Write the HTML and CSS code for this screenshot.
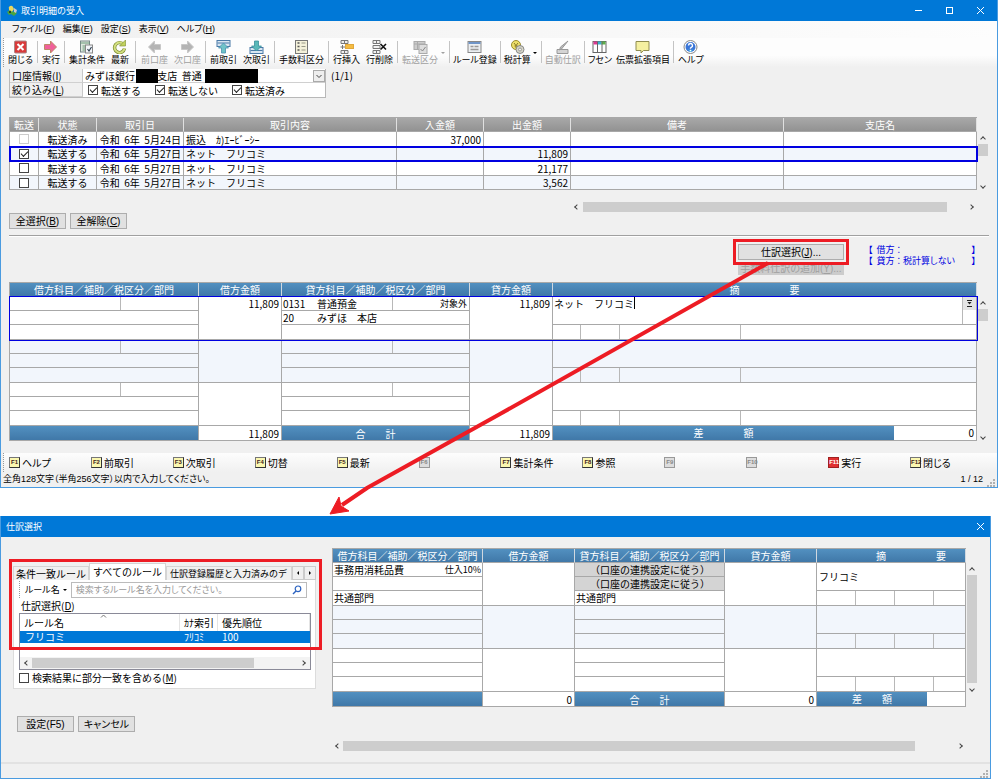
FILE: index.html
```html
<!DOCTYPE html>
<html lang="ja">
<head>
<meta charset="utf-8">
<title>取引明細の受入</title>
<link rel="stylesheet" href="styles.css">
</head>
<body>
<main class="stage">
<section class="window win-main">
  <header class="titlebar">
    <svg class="app-icon" width="12" height="12" viewBox="0 0 12 12"><path d="M3 4a2 2 0 0 1 4-2l1 2-2 3-3-1z" fill="#e8d860"/><path d="M1 7l3-2 2 2 3-1 2 2-3 3-3-2-2 1z" fill="#4aa53c"/><path d="M8 3l3 2-1 3-2-1z" fill="#c8c8d0"/><circle cx="4" cy="7" r="1" fill="#222"/></svg>
    <h1>取引明細の受入</h1>
    <div class="win-controls">
      <button aria-label="最小化"><svg width="9" height="9" viewBox="0 0 9 9"><path d="M1 4.5h7" stroke="#fff"/></svg></button>
      <button aria-label="最大化"><svg width="9" height="9" viewBox="0 0 9 9"><rect x="1.5" y="1.5" width="6" height="6" fill="none" stroke="#fff"/></svg></button>
      <button aria-label="閉じる"><svg width="9" height="9" viewBox="0 0 9 9"><path d="M1 1l7 7M8 1L1 8" stroke="#fff"/></svg></button>
    </div>
  </header>
  <nav class="menubar">
    <button>ファイル(<u>F</u>)</button><button>編集(<u>E</u>)</button><button>設定(<u>S</u>)</button><button>表示(<u>V</u>)</button><button>ヘルプ(<u>H</u>)</button>
  </nav>
  <div class="toolbar">
    <button><svg viewBox="0 0 14 14"><rect x="1" y="1" width="12" height="12" rx="1" fill="#d93a3a" stroke="#a88"/><path d="M4 4l6 6M10 4l-6 6" stroke="#fff" stroke-width="2"/></svg>閉じる</button>
    <i class="sep"></i>
    <button><svg viewBox="0 0 14 14"><path d="M1 4.500h6V1l6 6-6 6V9.500H1z" fill="#f0609a" stroke="#b86"/></svg>実行</button>
    <i class="sep"></i>
    <button><svg viewBox="0 0 14 14"><rect x="1" y="1" width="9" height="11" fill="#dfe8df" stroke="#788"/><path d="M1 3h9M3 6h3M3 8h3M3 10h3" stroke="#6a9a7a"/><rect x="6" y="5" width="7" height="8" fill="#f4f6fa" stroke="#888"/><path d="M8 9l1.500 2L12 7" fill="none" stroke="#345" stroke-width="1.200"/></svg>集計条件</button>
    <button><svg viewBox="0 0 14 14"><path d="M11 4.500A5 5 0 1 0 12 8.500" fill="none" stroke="#7c8a30" stroke-width="3.400"/><path d="M11 4.500A5 5 0 1 0 12 8.500" fill="none" stroke="#d2df80" stroke-width="2"/><path d="M13 0v6H7z" fill="#c2d35c" stroke="#7c8a30" stroke-width=".6"/></svg>最新</button>
    <i class="sep roomy"></i>
    <button class="off"><svg viewBox="0 0 14 14"><path d="M13 4.500H7V1L1 7l6 6V9.500h6z" fill="#b4b4b4" stroke="#c8c8c8"/></svg>前口座</button>
    <button class="off"><svg viewBox="0 0 14 14"><path d="M1 4.500h6V1l6 6-6 6V9.500H1z" fill="#b4b4b4" stroke="#c8c8c8"/></svg>次口座</button>
    <i class="sep"></i>
    <button><svg viewBox="0 0 14 14"><rect x=".5" y=".5" width="13" height="6" fill="#d8e6f2" stroke="#4a7aa8"/><path d="M1 3h12" stroke="#4a7aa8"/><path d="M7 3l5 5H9v5H5V8H2z" fill="#6fc3c8" stroke="#4a8fb0" stroke-width=".8"/></svg>前取引</button>
    <button><svg viewBox="0 0 14 14"><rect x=".5" y="7.500" width="13" height="6" fill="#d8e6f2" stroke="#4a7aa8"/><path d="M1 10.500h12" stroke="#4a7aa8"/><path d="M7 11L2 6h3V1h4v5h3z" fill="#59b8b8" stroke="#3a8f9c" stroke-width=".8"/></svg>次取引</button>
    <i class="sep"></i>
    <button><svg viewBox="0 0 14 14"><rect x="1" y=".5" width="12" height="13" fill="#f4f1da" stroke="#777"/><path d="M3 3h2M3 6.500h2M3 10h2" stroke="#555" stroke-width="1.500"/><path d="M7 3h4M7 6.500h4M7 10h4" stroke="#998"/></svg>手数料区分</button>
    <i class="sep"></i>
    <button><svg viewBox="0 0 14 14"><path d="M1.500.5h7v3h-7zM1.500 10.500h7v3h-7zM5 .5v3M5 10.500v3M1 7h5M3 5v4" fill="#eee" stroke="#777"/><rect x="6" y="4.500" width="8" height="4" fill="#f5bc42" stroke="#e0a83c"/></svg>行挿入</button>
    <button><svg viewBox="0 0 14 14"><path d="M.5.500h7v3h-7zM.5 5.500h7v3h-7zM.5 10.500h7v3h-7zM4 .5v3M4 10.500v3" fill="#f2f2f2" stroke="#777"/><path d="M8 4l5.500 5.500M13.500 4L8 9.500" stroke="#111" stroke-width="1.600"/></svg>行削除</button>
    <i class="sep"></i>
    <button class="off"><svg viewBox="0 0 14 14"><rect x=".5" y="1.500" width="11" height="8" fill="#ccc" stroke="#aaa"/><path d="M.5 4h11M4 2v7" stroke="#aaa"/><rect x="5.500" y="4.500" width="8" height="9" fill="#ddd" stroke="#aaa"/><path d="M7 9l2 2 3-4" fill="none" stroke="#888"/></svg>転送区分</button><i class="caret off"></i>
    <i class="sep"></i>
    <button class="tight"><svg viewBox="0 0 14 14"><rect x=".5" y="1.500" width="13" height="11" fill="#eceff2" stroke="#888"/><path d="M1 3h12" stroke="#6f95c8" stroke-width="2"/><path d="M3 6.500h3M7 6.500h4M3 9.500h8" stroke="#999" stroke-width="1.500"/></svg>ルール登録</button>
    <i class="sep"></i>
    <button class="tight"><svg viewBox="0 0 14 14"><circle cx="5.500" cy="5" r="4.500" fill="#eddf6a" stroke="#998c30"/><path d="M3.500 3l2 2.500 2-2.500M5.500 5v3M4 6h3" stroke="#887a28" fill="none"/><circle cx="9.500" cy="9.500" r="4" fill="#d6d6c8" stroke="#888"/><circle cx="9.500" cy="9.500" r="1.500" fill="#f2f2ea" stroke="#999"/></svg>税計算</button><i class="caret"></i>
    <i class="sep"></i>
    <button class="off tight"><svg viewBox="0 0 14 14"><path d="M1.500 9.500h11v4h-11z" fill="#d4d4d4" stroke="#999"/><path d="M12.500 1L6 9l-2 1 1-3z" fill="#bbb" stroke="#999"/></svg>自動仕訳</button>
    <i class="sep"></i>
    <button class="tight"><svg viewBox="0 0 14 14"><rect x=".5" y="1.500" width="13" height="11" fill="#fff" stroke="#666"/><path d="M1 3h4" stroke="#d83a90" stroke-width="3"/><path d="M5 3h4" stroke="#38b0d0" stroke-width="3"/><path d="M9 3h4" stroke="#5cb04a" stroke-width="3"/><path d="M5 2v10M9.500 2v10" stroke="#666"/></svg>フセン</button>
    <button class="tight"><svg viewBox="0 0 14 14"><path d="M.5 1.500h13v9H8L5.500 13v-2.500h-5z" fill="#f5f0a0" stroke="#8f8c50"/></svg>伝票拡張項目</button>
    <i class="sep"></i>
    <button><svg viewBox="0 0 14 14"><circle cx="7" cy="7" r="6.500" fill="#fff" stroke="#888"/><circle cx="7" cy="7" r="5" fill="#3a76d8"/><path d="M4 9a5 5 0 0 0 6 0L7 12z" fill="#3cc0e0"/><path d="M5 5.500a2 2 0 1 1 2.800 1.800L7 8v.8M7 9.800v1.400" fill="none" stroke="#fff" stroke-width="1.400"/></svg>ヘルプ</button>
  </div>

  <div class="body-main">
    <div class="filter-row">
      <div class="filter">
        <label class="flabel" for="acct">口座情報(<u>I</u>)</label>
        <div class="fselect">
          <select id="acct"><option>みずほ銀行　　&nbsp;支店&nbsp;&nbsp;普通</option></select>
          <span class="redact r1"></span><span class="redact r2"></span>
          <svg class="dd" width="12" height="12" viewBox="0 0 12 12"><rect x=".5" y=".5" width="11" height="11" fill="#eee" stroke="#aaa"/><path d="M3.500 5l2.500 2.500L8.500 5" fill="none" stroke="#444"/></svg>
        </div>
        <span class="flabel">絞り込み(<u>L</u>)</span>
        <div class="fchecks">
          <label><input type="checkbox" checked>転送する</label>
          <label><input type="checkbox" checked>転送しない</label>
          <label><input type="checkbox" checked>転送済み</label>
        </div>
      </div>
      <span class="count">(1/1)</span>
    </div>

    <div class="grid-wrap">
      <table class="list">
        <colgroup><col class="c29"><col class="c58"><col class="c87"><col class="c213"><col class="c87"><col class="c87"><col class="c213"><col></colgroup>
        <thead><tr><th>転送</th><th>状態</th><th>取引日</th><th>取引内容</th><th>入金額</th><th>出金額</th><th>備考</th><th>支店名</th></tr></thead>
        <tbody>
          <tr><td class="mid"><input type="checkbox" disabled aria-label="転送"></td><td class="mid">転送済み</td><td class="num">令和&nbsp; 6年&nbsp; 5月24日</td><td>振込　ｶ)ｴｰﾋﾞｰｼｰ</td><td class="num">37,000</td><td></td><td></td><td></td></tr>
          <tr class="sel"><td class="mid"><input type="checkbox" checked aria-label="転送"></td><td class="mid">転送する</td><td class="num">令和&nbsp; 6年&nbsp; 5月27日</td><td>ネット　フリコミ</td><td></td><td class="num">11,809</td><td></td><td></td></tr>
          <tr><td class="mid"><input type="checkbox" aria-label="転送"></td><td class="mid">転送する</td><td class="num">令和&nbsp; 6年&nbsp; 5月27日</td><td>ネット　フリコミ</td><td></td><td class="num">21,177</td><td></td><td></td></tr>
          <tr><td class="mid"><input type="checkbox" aria-label="転送"></td><td class="mid">転送する</td><td class="num">令和&nbsp; 6年&nbsp; 5月27日</td><td>ネット　フリコミ</td><td></td><td class="num">3,562</td><td></td><td></td></tr>
        </tbody>
      </table>
      <div class="vscroll"><i class="ar ar-up"></i><i class="thumb short"></i><i class="ar ar-down"></i></div>
    </div>
    <div class="hscroll hs-main"><i class="ar ar-left"></i><i class="thumb"></i><i class="ar ar-right"></i></div>

    <div class="btn-row">
      <button class="btn w57">全選択(<u>B</u>)</button><button class="btn w57">全解除(<u>C</u>)</button>
    </div>
    <hr>
    <div class="action-row">
      <div class="actions">
        <div class="marked"><button class="btn wide">仕訳選択(<u>J</u>)...</button></div>
        <button class="btn wide low" disabled>手数料仕訳の追加(<u>Y</u>)...</button>
      </div>
      <div class="taxinfo">
        <div><span>【&nbsp; 借方 ：</span><span>】</span></div>
        <div><span>【&nbsp; 貸方 ： 税計算しない</span><span>】</span></div>
      </div>
    </div>

    <div class="grid-wrap">
      <table class="journal">
        <colgroup><col class="c189"><col class="c83"><col class="c188"><col class="c83"><col></colgroup>
        <thead><tr><th>借方科目／補助／税区分／部門</th><th>借方金額</th><th>貸方科目／補助／税区分／部門</th><th>貸方金額</th><th>摘　　　　　要</th></tr></thead>
        <tbody>
          <tr class="sel">
            <td><div class="lines"><div class="split"><span></span><span></span></div><div></div><div></div></div></td>
            <td class="num">11,809</td>
            <td><div class="lines"><div class="split"><span><b class="code">0131</b>普通預金</span><span class="num small">対象外</span></div><div><b class="code">20</b>みずほ　本店</div><div></div></div></td>
            <td class="num">11,809</td>
            <td><div class="memo"><div class="memo-top edit"><input class="memo-in" type="text" value="ネット　フリコミ" aria-label="摘要"><span class="memo-side"><button aria-label="候補"><svg width="7" height="7" viewBox="0 0 7 7"><path d="M1 .5h5M1 6.500h5" stroke="#222"/><path d="M1.500 2h4l-2 2.500z" fill="#222"/></svg></button></span></div><div class="memo-sub"><span></span><span></span><span></span><span></span></div></div></td>
          </tr>
          <tr class="alt">
            <td><div class="lines"><div class="split"><span></span><span></span></div><div></div><div></div></div></td><td></td>
            <td><div class="lines"><div class="split"><span></span><span></span></div><div></div><div></div></div></td><td></td>
            <td><div class="memo"><div class="memo-top"></div><div class="memo-sub"><span></span><span></span><span></span><span></span></div></div></td>
          </tr>
          <tr>
            <td><div class="lines"><div class="split"><span></span><span></span></div><div></div><div></div></div></td><td></td>
            <td><div class="lines"><div class="split"><span></span><span></span></div><div></div><div></div></div></td><td></td>
            <td><div class="memo"><div class="memo-top"></div><div class="memo-sub"><span></span><span></span><span></span><span></span></div></div></td>
          </tr>
        </tbody>
        <tfoot><tr><td class="blue"></td><td class="num">11,809</td><td class="blue">合　　計</td><td class="num">11,809</td><td><div class="diff"><span class="blue">差　　　　額</span><span class="num rest">0</span></div></td></tr></tfoot>
      </table>
      <div class="vscroll"><i class="ar ar-up"></i><i class="thumb short"></i><i class="ar ar-down"></i></div>
    </div>
  </div>

  <div class="fkeys">
    <button><kbd>F1</kbd>ヘルプ</button><button><kbd>F2</kbd>前取引</button><button><kbd>F3</kbd>次取引</button><button><kbd>F4</kbd>切替</button><button><kbd>F5</kbd>最新</button><button disabled><kbd>F6</kbd></button><button><kbd>F7</kbd>集計条件</button><button><kbd>F8</kbd>参照</button><button disabled><kbd>F9</kbd></button><button disabled><kbd>F10</kbd></button><button class="run"><kbd>F11</kbd>実行</button><button><kbd>F12</kbd>閉じる</button>
  </div>
  <footer class="status"><span>全角128文字（半角256文字）以内で入力してください。</span><span class="pos">1 / 12</span><svg class="grip" width="8" height="8" viewBox="0 0 8 8"><path d="M6 0h2v2H6zM3 3h2v2H3zM6 3h2v2H6zM0 6h2v2H0zM3 6h2v2H3zM6 6h2v2H6z" fill="#b0b0b0"/></svg></footer>
</section>

<section class="window win-sub">
  <header class="titlebar">
    <h2>仕訳選択</h2>
    <div class="win-controls"><button aria-label="閉じる"><svg width="9" height="9" viewBox="0 0 9 9"><path d="M1 1l7 7M8 1L1 8" stroke="#fff"/></svg></button></div>
  </header>
  <div class="body-sub">
    <div class="rule-col">
      <div class="tabs"><button>条件一致ルール</button><button class="on">すべてのルール</button><button class="cut">仕訳登録履歴と入力済みのデ</button><button class="nav" aria-label="前のタブ"><i class="tri tri-l"></i></button><button class="nav" aria-label="次のタブ"><i class="tri tri-r"></i></button></div>
      <div class="panel">
        <div class="search">
          <button class="kind">ルール名<i class="caret"></i></button>
          <div class="search-box"><input type="text" placeholder="検索するルール名を入力してください。" aria-label="ルール名"><svg width="10" height="10" viewBox="0 0 10 10"><circle cx="6" cy="3.800" r="2.800" fill="none" stroke="#2a62c0" stroke-width="1.200"/><path d="M4 6L1 9" stroke="#2a62c0" stroke-width="1.500"/></svg></div>
        </div>
        <div class="caption">仕訳選択(<u>D</u>)</div>
        <div class="rules">
          <table>
            <colgroup><col><col class="c38"><col class="c92"></colgroup>
            <thead><tr><th>ルール名<svg class="sort" width="7" height="4" viewBox="0 0 7 4"><path d="M1 3.500l2.500-2.500 2.500 2.500" fill="none" stroke="#777"/></svg></th><th>ｶﾅ索引</th><th>優先順位</th></tr></thead>
            <tbody><tr><td>フリコミ</td><td>ﾌﾘｺﾐ</td><td>100</td></tr></tbody>
          </table>
          <div class="hscroll hs-rules"><i class="ar ar-left"></i><i class="thumb"></i><i class="ar ar-right"></i></div>
        </div>
        <label class="partial"><input type="checkbox"><span>検索結果に部分一致を含める(<u>M</u>)</span></label>
      </div>
      <div class="redbox"></div>
      <div class="btn-row"><button class="btn w57">設定(F5)</button><button class="btn w57">キャンセル</button></div>
    </div>
    <div class="entry-col">
      <div class="grid-wrap">
        <table class="journal compact">
          <colgroup><col class="c150"><col class="c92"><col class="c150"><col class="c92"><col></colgroup>
          <thead><tr><th>借方科目／補助／税区分／部門</th><th>借方金額</th><th>貸方科目／補助／税区分／部門</th><th>貸方金額</th><th>　　　　摘　　　　　要</th></tr></thead>
          <tbody>
            <tr>
              <td><div class="lines"><div class="pair"><span>事務用消耗品費</span><span class="small">仕入10%</span></div><div></div><div>共通部門</div></div></td><td></td>
              <td><div class="lines"><div class="grey">（口座の連携設定に従う）</div><div class="grey">（口座の連携設定に従う）</div><div>共通部門</div></div></td><td></td>
              <td><div class="memo"><div class="memo-top">フリコミ</div><div class="memo-sub"><span></span><span></span><span></span><span></span></div></div></td>
            </tr>
            <tr class="alt">
              <td><div class="lines"><div></div><div></div><div></div></div></td><td></td>
              <td><div class="lines"><div></div><div></div><div></div></div></td><td></td>
              <td><div class="memo"><div class="memo-top"></div><div class="memo-sub"><span></span><span></span><span></span><span></span></div></div></td>
            </tr>
            <tr>
              <td><div class="lines"><div></div><div></div><div></div></div></td><td></td>
              <td><div class="lines"><div></div><div></div><div></div></div></td><td></td>
              <td><div class="memo"><div class="memo-top"></div><div class="memo-sub"><span></span><span></span><span></span><span></span></div></div></td>
            </tr>
          </tbody>
          <tfoot><tr><td class="blue"></td><td class="num">0</td><td class="blue">合　　計</td><td class="num">0</td><td><div class="diff"><span class="blue">差　　額</span><span class="rest"></span></div></td></tr></tfoot>
        </table>
        <div class="vscroll"><i class="ar ar-up"></i><i class="thumb full"></i><i class="ar ar-down"></i></div>
      </div>
      <div class="hscroll hs-sub"><i class="ar ar-left"></i><i class="thumb"></i><i class="ar ar-right"></i></div>
    </div>
  </div>
  <footer class="status"><svg class="grip" width="8" height="8" viewBox="0 0 8 8"><path d="M6 0h2v2H6zM3 3h2v2H3zM6 3h2v2H6zM0 6h2v2H0zM3 6h2v2H3zM6 6h2v2H6z" fill="#b0b0b0"/></svg></footer>
</section>

<svg class="arrow" width="460" height="270" viewBox="320 250 460 270"><path d="M768 263L500 414 367 488 342 505" fill="none" stroke="#ed1c24" stroke-width="4"/><path d="M330 514l9-17 2 9 8 5z" fill="#ed1c24" stroke="#ed1c24"/></svg>
</main>
</body>
</html>
```
FILE: styles.css
```css
* { box-sizing: border-box; }

body {
  margin: 0;
  background: #fff;
  color: #000;
  font: 10px/13px "Noto Sans CJK JP", "Liberation Sans", sans-serif;
}

button, input, select {
  font: inherit;
  color: inherit;
  margin: 0;
  padding: 0;
  border: 0;
  background: none;
}

i, kbd, b { font-style: normal; font-weight: normal; }

.stage { position: relative; display: flex; flex-direction: column; gap: 28px; }

.window {
  background: #f0f0f0;
  border: 1px solid #4a9be0;
  border-top: 0;
}
.win-main { margin-right: 2px; }
.win-sub { margin-right: 9px; }

.titlebar {
  display: flex;
  align-items: center;
  height: 21px;
  padding: 0 5px;
  background: #0078d7;
  color: #fff;
}
.win-main .titlebar { padding-right: 12px; }
.titlebar h1, .titlebar h2 { margin: 0; font-size: 9px; font-weight: normal; }
.app-icon { margin-right: 3px; }
.win-controls { display: flex; gap: 22px; margin-left: auto; }
.win-controls button { display: flex; }

.menubar {
  display: flex;
  gap: 8px;
  height: 17px;
  padding: 0 11px;
  align-items: center;
  background: linear-gradient(90deg, #f0f0f0, #fdfdfd);
  font: 9px/13px "Liberation Sans", "Noto Sans CJK JP", sans-serif;
  font-feature-settings: "palt";
}

.toolbar {
  display: flex;
  height: 29px;
  margin-left: 2px;
  border-left: 1px dotted #999;
  padding-left: 1px;
  background: linear-gradient(#fdfdfd 60%, #f0f0f0);
  font-size: 9px;
  line-height: 12px;
}
.toolbar button {
  display: flex;
  flex-direction: column;
  align-items: center;
  padding: 2px 3px 0;
  white-space: nowrap;
  font-feature-settings: "palt";
}
.toolbar .tight { padding: 2px 2px 0; }
.toolbar svg { width: 15px; height: 14px; }
.toolbar .off { color: #a0a0a0; }
.sep { width: 1px; margin: 3px 1px 4px; background: #c4c4c4; }
.sep.roomy { margin-left: 3px; margin-right: 2px; }
.caret {
  width: 0;
  height: 0;
  align-self: center;
  border: 2px solid transparent;
  border-top-color: #000;
  border-bottom: 0;
  margin: 0 2px 0 3px;
}
.toolbar .caret { margin: 0 3px 0 0; }
.caret.off { border-top-color: #a0a0a0; }

.body-main { padding: 2px 8px 12px; }

.filter-row { display: flex; gap: 5px; margin-bottom: 19px; }
.filter {
  display: grid;
  grid-template-columns: 73px 242px;
  grid-auto-rows: 14px;
  border: 1px solid #b8b8b8;
  border-top: 0;
}
.flabel { padding-left: 2px; border-right: 1px solid #c8c8c8; border-bottom: 1px solid #d0d0d0; }
.fselect { position: relative; display: flex; background: #fff; border-bottom: 1px solid #d0d0d0; }
.fselect select { flex: 1; appearance: none; padding-left: 2px; line-height: 12px; }
.dd { position: absolute; right: 0; top: 1px; }
.redact { position: absolute; top: 0; height: 14px; background: #000; }
.r1 { left: 53px; width: 22px; }
.r2 { left: 122px; width: 53px; }
.fchecks { display: flex; gap: 14px; padding-left: 5px; background: #fff; }
.fchecks label, .partial { display: flex; align-items: center; gap: 3px; }

input[type="checkbox"] {
  appearance: none;
  position: relative;
  flex: none;
  width: 10px;
  height: 10px;
  border: 1px solid #444;
  background: #fff;
}
input[type="checkbox"]:disabled { border-color: #ccc; }
input[type="checkbox"]:checked::after {
  content: "";
  position: absolute;
  left: 1px;
  top: 1px;
  width: 6px;
  height: 3px;
  border: 1px solid #222;
  border-top: 0;
  border-right: 0;
  transform: rotate(-45deg);
}

.grid-wrap { display: flex; }
.grid-wrap table { flex: 1; width: 0; }

table { table-layout: fixed; border-collapse: separate; border-spacing: 0; }
.list, .journal { border: 1px solid #a8a8a8; border-right: 0; border-bottom: 0; background: #fff; }
.list th, .list td, .journal th, .journal td {
  height: 14px;
  padding: 0;
  border-right: 1px solid #a8a8a8;
  border-bottom: 1px solid #a8a8a8;
  white-space: nowrap;
  font-weight: normal;
}
.list th { background: linear-gradient(#a8a8a8, #929292); color: #fff; border-right-color: #e0e0e0; }
.list td { padding: 0 2px; }
.list tbody tr:nth-child(even) td { background: #f2f6fc; }
.list tbody tr:nth-child(odd) td { height: 15px; }
.list tr.sel, .journal tr.sel { outline: 1px solid #0000e0; }
.list tr.sel { outline-width: 2px; outline-offset: -1px; }
td.mid { text-align: center; }
td.mid input { display: block; margin: 0 auto; }
.num { text-align: right; }
.c29 { width: 29px; } .c38 { width: 38px; } .c58 { width: 58px; } .c83 { width: 83px; } .c87 { width: 87px; }
.c92 { width: 92px; } .c150 { width: 150px; } .c188 { width: 188px; } .c189 { width: 189px; } .c213 { width: 213px; }

.journal th, .blue { background: linear-gradient(#5290c0, #4078a8); color: #fff; text-align: center; }
.journal th { border-right-color: #d0d8e0; }
.journal tbody td { height: 43px; vertical-align: top; }
.journal td.num { padding-right: 2px; }
.journal tfoot td { height: 15px; }
.journal .alt td { background: #f2f6fc; }
.lines { display: grid; grid-template-rows: repeat(3, 14px); }
.lines > div { border-bottom: 1px solid #a8a8a8; padding-left: 1px; }
.lines > div:last-child { border-bottom: 0; }
.lines .split { display: grid; grid-template-columns: 110px 1fr; }
.split span:first-child { border-right: 1px solid #b8b8b8; }
.split .num { padding-right: 2px; }
.code { display: inline-block; width: 34px; }
.small { font-size: 9px; }
.pair { display: flex; justify-content: space-between; padding-right: 1px; }
.lines > .grey { background: #d4d4d4; text-align: center; }
.memo { display: grid; grid-template-rows: 28px 14px; }
.memo-top { border-bottom: 1px solid #a8a8a8; padding-left: 2px; }
.memo-top.edit { display: flex; align-items: flex-start; justify-content: space-between; padding-left: 1px; }
.memo-in { width: 81px; border-right: 1px solid #000; height: 12px; }
.memo-side { align-self: stretch; width: 14px; border-left: 1px solid #b8b8b8; }
.memo-side button { display: flex; align-items: center; justify-content: center; width: 13px; height: 13px; background: #e4e4e4; }
.memo-sub { display: grid; grid-template-columns: 28px 39px 121px 1fr; }
.memo-sub span { border-right: 1px solid #b8b8b8; }
.memo-sub span:last-child { border-right: 0; }
.compact .memo-top { line-height: 28px; }
.compact .memo-sub { grid-template-columns: 39px 39px 39px 1fr; }
.diff { display: flex; }
.diff .blue { flex: 1; height: 14px; }
.diff .rest { width: 82px; padding-right: 2px; }
.compact .diff .rest { width: 38px; }

.vscroll { display: flex; flex-direction: column; align-items: center; width: 12px; padding: 18px 0 2px; }
.hscroll { display: flex; align-items: center; height: 12px; }
.thumb { background: #cdcdcd; }
.vscroll .thumb { width: 10px; }
.thumb.short { height: 12px; margin: 3px 0 auto; }
.vscroll .full { flex: 1; margin: 3px 0 14px; }
.hscroll .thumb { flex: 1; height: 10px; }
.ar { width: 4px; height: 4px; border: solid #444; border-width: 1px 0 0 1px; transform: rotate(45deg); flex: none; }
.ar-up { margin-top: 2px; }
.ar-down { transform: rotate(225deg); }
.compact + .vscroll { padding-bottom: 16px; }
.compact + .vscroll .full { margin-bottom: 4px; }
.ar-left { transform: rotate(-45deg); }
.ar-right { transform: rotate(135deg); }
.list + .vscroll, .journal + .vscroll { flex: none; }
.hs-main { margin: 11px 12px 0 562px; padding: 0 4px; }
.hs-main .thumb { margin: 0 22px 0 4px; }

.btn-row { display: flex; gap: 4px; }
.btn {
  height: 16px;
  border: 1px solid #adadad;
  background: #e1e1e1;
  font: 10px/13px "Liberation Sans", "Noto Sans CJK JP", sans-serif;
  font-feature-settings: "palt";
  white-space: nowrap;
}
.w57 { width: 57px; }
hr { margin: 6px 0 0; border: 0; border-top: 1px solid #a0a0a0; border-bottom: 1px solid #fff; }

.action-row { display: flex; justify-content: flex-end; gap: 24px; padding: 7px 13px 7px 0; }
.actions { width: 106px; }
.marked { position: relative; z-index: 2; display: flex; margin-bottom: 2px; }
.marked::after { content: ""; position: absolute; inset: -5px; border: 3px solid #ed1c24; }
.wide { width: 100%; }
.low { display: block; height: 13px; line-height: 11px; border-color: #ccc; background: #ccc; color: #a0a0a0; }
.taxinfo { width: 108px; color: #0000e0; font-size: 9px; line-height: 11px; }
.taxinfo div { display: flex; justify-content: space-between; font-feature-settings: "palt"; white-space: nowrap; }

.fkeys {
  display: grid;
  grid-template-columns: repeat(12, 1fr);
  height: 19px;
  margin-left: 2px;
  padding: 0 5px;
  border-left: 1px dotted #999;
  background: linear-gradient(#fdfdfd, #f0f0f0);
}
.fkeys button { display: flex; align-items: center; gap: 2px; white-space: nowrap; font-size: 10px; font-feature-settings: "palt"; }
kbd {
  width: 11px;
  height: 11px;
  border: 1px solid #777;
  border-right-color: #333;
  border-bottom-color: #333;
  background: #fbf7b0;
  color: #402020;
  font: bold 6px/9px "Liberation Sans", sans-serif;
  text-align: center;
}
.fkeys button:disabled kbd { background: #ddd; border-color: #999; color: #888; }
.fkeys .run kbd { background: #e03030; border-color: #a02020; color: #fff; }

.status { display: flex; align-items: center; height: 15px; padding: 0 2px; font: 9px/13px "Liberation Sans", "Noto Sans CJK JP", sans-serif; font-feature-settings: "palt"; }
.pos { margin-left: auto; padding-right: 4px; }
.grip { margin-left: auto; align-self: flex-end; }
.pos + .grip { margin-left: 0; }
.win-sub .status { height: 16px; border-top: 2px solid #e2e2e2; }

.body-sub { display: flex; gap: 16px; padding: 11px 12px 10px; }
.rule-col { position: relative; width: 303px; padding-top: 15px; }
.entry-col { flex: 1; }
.tabs { display: flex; align-items: flex-end; height: 17px; }
.tabs button { height: 14px; border: 1px solid #d4d4d4; border-bottom: 0; white-space: nowrap; padding: 0 2px; }
.tabs .on { height: 17px; background: #fff; padding: 0 3px 2px; }
.tabs .cut { flex: 1; width: 0; padding: 0 0 0 3px; overflow: hidden; text-align: left; font-size: 9px; }
.tabs .nav { display: flex; align-items: center; justify-content: center; width: 12px; border: 1px solid #ccc; padding: 0; }
.tri { border: 2px solid transparent; }
.tri-l { border-right-color: #000; border-left: 0; }
.tri-r { border-left-color: #000; border-right: 0; }
.panel { padding: 1px 4px 3px 5px; background: #fff; border: 1px solid #dcdcdc; border-top: 0; }
.search { display: flex; align-items: center; height: 17px; gap: 2px; padding-right: 4px; border-left: 1px dotted #999; }
.kind { display: flex; padding-left: 5px; font-size: 9px; white-space: nowrap; font-feature-settings: "palt"; }
.search-box { flex: 1; display: flex; align-items: center; height: 16px; padding: 0 4px; border: 1px solid #bbb; }
.search-box input { flex: 1; width: 0; font-size: 9px; font-feature-settings: "palt"; }
.search-box input::placeholder { color: #999; }
.caption { height: 15px; line-height: 15px; padding-left: 2px; }
.rules { border: 1px solid #8a8a98; }
.rules table { width: 100%; }
.rules th { position: relative; height: 17px; padding: 0 4px; font-weight: normal; text-align: left; white-space: nowrap; border-right: 1px solid #e4e4e4; }
.rules th + th, .rules td + td { padding: 0 0 0 4px; }
.sort { position: absolute; left: 50%; top: 0; }
.rules td { height: 12px; line-height: 12px; padding: 0 5px; background: #0078d7; color: #fff; }
.hs-rules { margin-top: 14px; padding: 0 5px; background: #f3f3f3; }
.hs-rules .thumb { margin: 0 47px 0 3px; }
.partial { height: 15px; }
.rule-col > .btn-row { margin: 27px 0 0 4px; }
.redbox { position: absolute; left: -4px; right: -6px; top: 11px; height: 91px; border: 3px solid #ed1c24; }
.hs-sub { margin: 33px 12px 0 0; padding: 0 4px; }
.hs-sub .thumb { margin: 0 43px 0 3px; }

.arrow { position: absolute; left: 320px; top: 250px; z-index: 3; pointer-events: none; }
```
